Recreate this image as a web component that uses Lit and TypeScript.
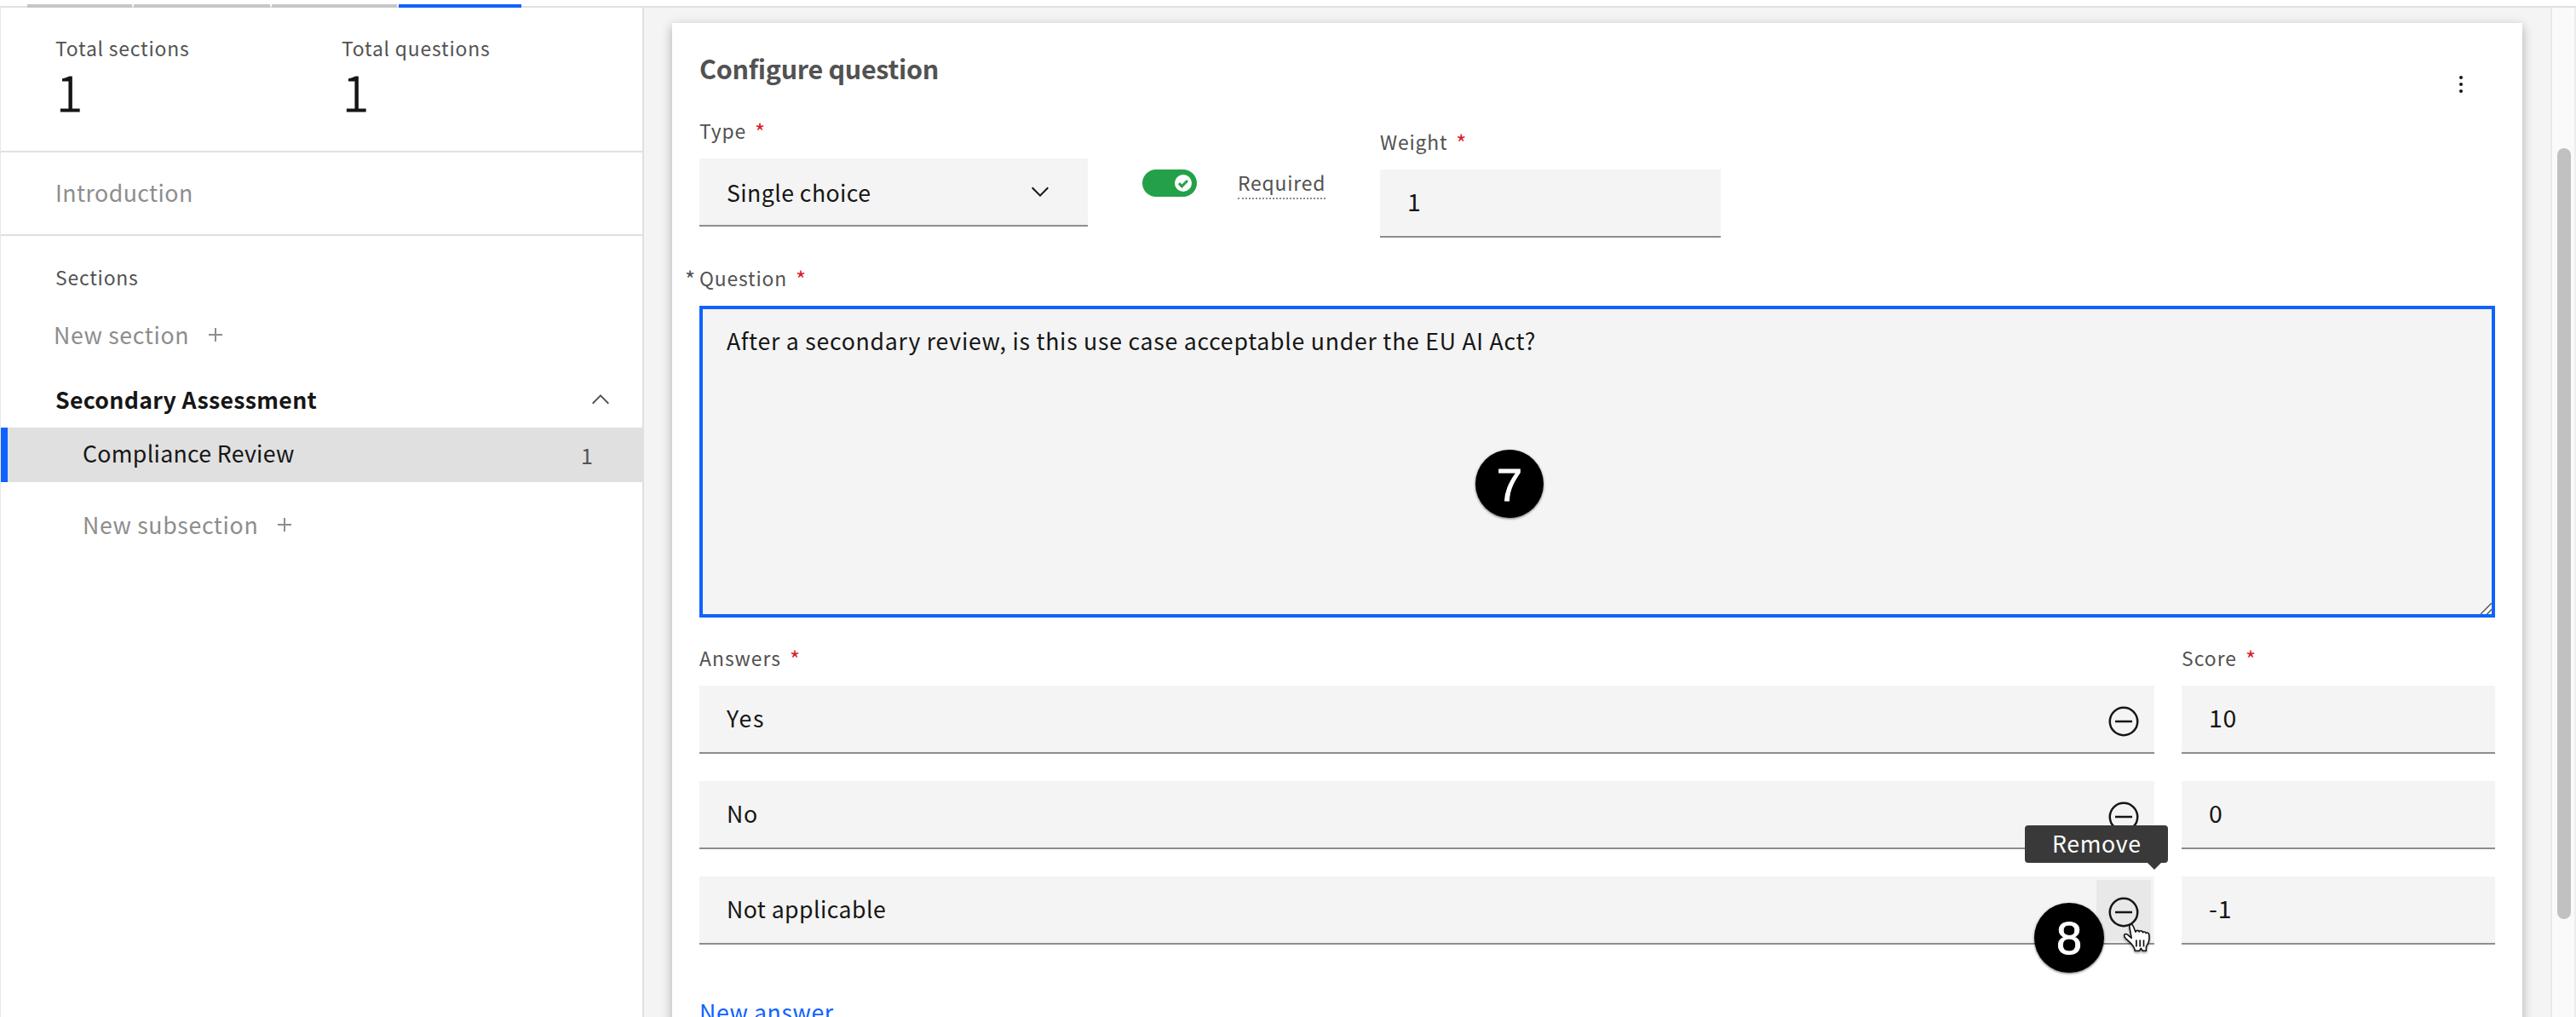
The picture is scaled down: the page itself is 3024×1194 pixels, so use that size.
import { LitElement, html, css, svg } from "lit";
import { customElement, property } from "lit/decorators.js";
import { classMap } from "lit/directives/class-map.js";

const type = css`
  * { box-sizing: border-box; }
  .label { font-size: 22.9px; line-height: 32px; height: 32px; letter-spacing: 0.8px; color: #525252; white-space: nowrap; }
  .body { font-size: 26.7px; line-height: 40px; height: 40px; letter-spacing: 0.65px; color: #161616; white-space: nowrap; }
  .muted { color: #8d8d8d; }
  .star { color: #da1e28; margin-left: 10px; font-size: 26px; line-height: 1; vertical-align: -2px; }
  svg { display: block; flex: none; }
`;

const addIcon = svg`<svg width="32" height="32" viewBox="0 0 32 32" fill="#8d8d8d"><path d="M17 15V8h-2v7H8v2h7v7h2v-7h7v-2z"/></svg>`;
const chevronUp = svg`<svg width="32" height="32" viewBox="0 0 16 16" fill="#525252"><path d="M8 5l5 5-.7.7L8 6.4l-4.3 4.3L3 10z"/></svg>`;
const chevronDown = svg`<svg width="32" height="32" viewBox="0 0 16 16" fill="#161616"><path d="M8 11L3 6l.7-.7L8 9.6l4.3-4.3.7.7z"/></svg>`;
const subtractIcon = svg`<svg width="40" height="40" viewBox="0 0 32 32" fill="none" stroke="#161616" stroke-width="2"><circle cx="16" cy="16" r="13"/><path d="M8 16h16"/></svg>`;
const overflowIcon = svg`<svg width="32" height="32" viewBox="0 0 32 32" fill="#161616"><circle cx="16" cy="8" r="2"/><circle cx="16" cy="16" r="2"/><circle cx="16" cy="24" r="2"/></svg>`;
const handCursor = svg`<svg width="34" height="38" viewBox="0 0 34 38"><path d="M7.8 4C7.3 1.2 11 .4 12 3l3 7.2c.2-2.4 3.6-2.4 4.2-.2.6-1.8 3.8-1.6 4.3.8.8-1.4 3.2-1 3.7.8 1.2-1.2 3.4-.4 3.6 1.6.3 3 .3 5.800-.3 8-.5 2.300-2.500 4.800-3 6.500-.2 1.600 0 3.200 0 4.600h-4.200l-2.100-3-1.700 3h-5.300c.2-3-2.400-6-4.400-8.500L3.200 17.500C-.2 14 2.600 11.200 5.600 13.400l4.600 4z" fill="#fff" stroke="#111" stroke-width="1.600" stroke-linejoin="round"/><path d="M15.900 19.500v8M20.200 19.500v8M24.500 19.500v8" stroke="#111" stroke-width="1.700"/></svg>`;

interface Answer { text: string; score: string; cls: string; active?: boolean; }

@customElement("assessment-sidebar")
class AssessmentSidebar extends LitElement {
  static styles = [type, css`
    :host { display: block; width: 756px; flex: none; background: #fff; border-left: 1px solid #e8e8e8; border-right: 2px solid #e0e0e0; box-sizing: border-box; }
    .stats { height: 170px; padding: 31px 0 0 64px; display: grid; grid-template-columns: 336px 1fr; border-bottom: 2px solid #e0e0e0; }
    .number { font-size: 58px; font-weight: 300; -webkit-text-stroke: 1px #161616; line-height: 64px; margin-top: 2px; margin-left: 1px; color: #161616; }
    .intro { height: 98px; padding: 27px 0 0 64px; border-bottom: 2px solid #e0e0e0; }
    .intro .body { letter-spacing: 0.45px; }
    .sections { padding: 32px 0 0 64px; }
    .add { display: flex; gap: 15px; align-items: center; }
    .new-section { padding: 32px 0 0 62px; }
    .group { display: flex; justify-content: space-between; align-items: center; padding: 36px 33px 0 64px; }
    .group .body { font-weight: 700; letter-spacing: 0.3px; }
    .item { display: flex; justify-content: space-between; height: 64px; margin-top: 13px; padding: 10px 58px 0 88px; border-left: 8px solid #0f62fe; background: #e0e0e0; }
    .item .body { letter-spacing: 0.3px; }
    .item .label { margin-top: 6px; letter-spacing: 0; font-size: 25px; }
    .new-sub { padding: 30px 0 0 96px; }
  `];
  render() {
    return html`
      <div class="stats">
        <div><div class="label">Total sections</div><div class="number">1</div></div>
        <div><div class="label">Total questions</div><div class="number">1</div></div>
      </div>
      <div class="intro"><div class="body muted">Introduction</div></div>
      <div class="sections"><div class="label">Sections</div></div>
      <div class="add new-section"><div class="body muted">New section</div>${addIcon}</div>
      <div class="group"><div class="body">Secondary Assessment</div>${chevronUp}</div>
      <div class="item"><div class="body">Compliance Review</div><div class="label">1</div></div>
      <div class="add new-sub"><div class="body muted">New subsection</div>${addIcon}</div>`;
  }
}

@customElement("question-card")
class QuestionCard extends LitElement {
  @property({ attribute: false }) answers: Answer[] = [
    { text: "Yes", score: "10", cls: "yes" },
    { text: "No", score: "0", cls: "no" },
    { text: "Not applicable", score: "-1", cls: "na", active: true },
  ];
  static styles = [type, css`
    :host { display: block; box-sizing: border-box; height: 1300px; background: #fff; padding: 33px 32px 0; box-shadow: 0 4px 12px rgba(0, 0, 0, 0.3); }
    .head { display: flex; justify-content: space-between; height: 40px; }
    .title { font-size: 30.5px; line-height: 40px; font-weight: 700; letter-spacing: -0.3px; color: #525252; }
    .menu { width: 80px; height: 78px; display: flex; align-items: center; justify-content: center; }
    .row { display: flex; height: 179px; align-items: flex-start; }
    .type { width: 456px; margin-top: 37px; }
    .box { display: flex; justify-content: space-between; height: 80px; margin-top: 17px; padding: 0 32px; background: #f4f4f4; border-bottom: 2px solid #8d8d8d; }
    .box .body { height: 75px; line-height: 75px; }
    .box .body.digits { font-size: 28.5px; line-height: 74px; }
    .select { padding-right: 40px; align-items: center; }
    .select .body { letter-spacing: 0.42px; }
    .toggle { width: 64px; height: 32px; margin: 99px 48px 0 64px; border-radius: 16px; background: #24a148; padding: 6px; display: flex; justify-content: flex-end; }
    .knob { width: 20px; height: 20px; border-radius: 50%; background: #fff; display: flex; align-items: center; justify-content: center; padding-top: 1px; }
    .required { width: 103px; height: 36px; margin-top: 98px; border-bottom: 2px dotted #8d8d8d; }
    .weight { width: 400px; margin: 50px 0 0 64px; }
    .question { display: flex; margin-top: 31px; }
    .mark { margin: 0 5px 0 -17px; width: 12px; letter-spacing: 0; font-size: 26px; line-height: 34px; }
    .area { position: relative; height: 366px; margin-top: 17px; padding: 17px 28px; background: #f4f4f4; border: 4px solid #0f62fe; }
    .area .body { letter-spacing: 0.73px; }
    .grip { position: absolute; right: 0; bottom: 0; }
    .grid { display: grid; grid-template-columns: 1708px 368px; column-gap: 32px; margin-top: 31px; }
    .grid .box { margin-bottom: 15px; }
    .grid .box.answer { padding-right: 4px; }
    .grid .score .body { letter-spacing: 0.8px; }
    .grid .label { letter-spacing: 1px; }
    .yes { letter-spacing: 1.6px; }
    .na { letter-spacing: 0.42px; }
    .minus { width: 64px; height: 72px; margin-top: 4px; padding-top: 4px; display: flex; align-items: center; justify-content: center; }
    .minus.active { background: #e8e8e8; }
    .new { margin-top: 44px; color: #0f62fe; letter-spacing: 0.6px; }
  `];
  render() {
    return html`
      <div class="head"><div class="title">Configure question</div><div class="menu">${overflowIcon}</div></div>
      <div class="row">
        <div class="type">
          <div class="label">Type<span class="star">*</span></div>
          <div class="box select"><div class="body">Single choice</div>${chevronDown}</div>
        </div>
        <div class="toggle"><div class="knob"><svg width="12" height="10" viewBox="0 0 6 5" fill="#24a148"><path d="M2.200 2.700L5 0l1 1-3.800 4L0 2.700l1-1.200z"/></svg></div></div>
        <div class="label required">Required</div>
        <div class="weight">
          <div class="label">Weight<span class="star">*</span></div>
          <div class="box"><div class="body digits">1</div></div>
        </div>
      </div>
      <div class="question"><div class="label mark">*</div><div class="label">Question<span class="star">*</span></div></div>
      <div class="area">
        <div class="body">After a secondary review, is this use case acceptable under the EU AI Act?</div>
        <svg class="grip" width="13" height="13" viewBox="0 0 13 13"><path d="M1 13L13 1M8 13l5-5" stroke="#fff" stroke-width="4"/><path d="M0 13L13 0M7.500 13L13 7.500" stroke="#555" stroke-width="1.500"/></svg>
      </div>
      <div class="grid">
        <div class="label">Answers<span class="star">*</span></div>
        <div class="label">Score<span class="star">*</span></div>
        ${this.answers.map(a => html`
          <div class="box answer"><div class="body ${a.cls}">${a.text}</div>
            <div class=${classMap({ minus: true, active: !!a.active })}>${subtractIcon}</div></div>
          <div class="box score"><div class="body digits">${a.score}</div></div>`)}
      </div>
      <div class="body new">New answer</div>`;
  }
}

@customElement("app-root")
class AppRoot extends LitElement {
  static styles = [type, css`
    :host { position: relative; display: flex; flex-direction: column; width: 3024px; height: 1194px; overflow: hidden; background: #fff; font-family: "Noto Sans CJK JP", "Noto Sans", sans-serif; }
    .tabs { position: relative; display: flex; flex: none; gap: 2px; height: 9px; padding: 5px 0 0 32px; background: linear-gradient(#fff 7px, #e0e0e0 7px); }
    .tab { height: 4px; background: #c6c6c6; }
    .t1 { width: 123px; } .t2 { width: 160px; } .t3 { width: 147px; } .t4 { width: 144px; background: #0f62fe; }
    .page { display: flex; flex: 1; min-height: 0; overflow: hidden; }
    main { flex: 1; overflow: hidden; background: #f4f4f4; padding: 18px 33px 0; }
    .track { width: 30px; flex: none; background: #fafafa; border-left: 2px solid #e8e8e8; border-right: 2px solid #ededed; padding: 165px 0 0 6px; }
    .thumb { width: 16px; height: 905px; border-radius: 8px; background: #c1c1c1; }
    .badge { position: absolute; border-radius: 50%; background: #000; color: #fff; font-family: "Liberation Sans", sans-serif; font-size: 54px; text-align: center; -webkit-text-stroke: 0.9px #fff; box-shadow: 0 1px 3px rgba(0, 0, 0, 0.6); }
    .seven { left: 1732px; top: 528px; width: 80px; height: 80px; line-height: 82px; }
    .eight { left: 2388px; top: 1060px; width: 82px; height: 82px; line-height: 83px; }
    .tooltip { position: absolute; left: 2377px; top: 969px; width: 168px; height: 44px; border-radius: 4px; background: #393939; padding-left: 32px; }
    .tooltip .body { color: #fff; line-height: 41px; }
    .tooltip::after { content: ""; position: absolute; left: 144px; top: 44px; border: 8px solid transparent; border-top-color: #393939; border-bottom: 0; }
    .cursor { position: absolute; left: 2492px; top: 1084px; filter: drop-shadow(0 2px 1px rgba(0, 0, 0, 0.35)); }
  `];
  render() {
    return html`
      <div class="tabs"><div class="tab t1"></div><div class="tab t2"></div><div class="tab t3"></div><div class="tab t4"></div></div>
      <div class="page">
        <assessment-sidebar></assessment-sidebar>
        <main><question-card></question-card></main>
        <div class="track"><div class="thumb"></div></div>
      </div>
      <div class="tooltip"><div class="body">Remove</div></div>
      <div class="badge seven">7</div>
      <div class="badge eight">8</div>
      <div class="cursor">${handCursor}</div>`;
  }
}
